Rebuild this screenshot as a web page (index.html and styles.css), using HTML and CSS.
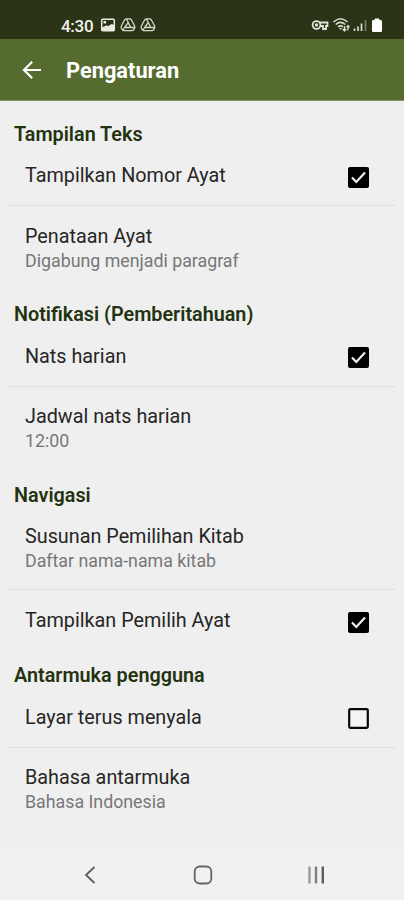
FILE: index.html
```html
<!DOCTYPE html>
<html lang="id">
<head>
<meta charset="utf-8">
<title>Pengaturan</title>
<link rel="stylesheet" href="styles.css">
</head>
<body>
<div class="screen">
  <header class="status">
    <span class="clock">4:30</span>
    <svg class="status-left" width="58" height="18" viewBox="0 0 58 18">
      <rect x="1.700" y="3.200" width="12.600" height="11.600" rx="1" fill="none" stroke="#e9ebe2" stroke-width="1.500"/>
      <path d="M2 14V11.500l4-2 2.500.5L11.500 8l2.500 1v5.500H2z" fill="#e9ebe2"/>
      <rect x="3.500" y="5" width="2.600" height="2.500" fill="#e9ebe2"/>
      <g fill="none" stroke="#d4d8c8" stroke-width="1.300" stroke-linejoin="round">
        <path d="M26.500 2.800h3q1.200 0 1.800 1l3.200 6q.8 1.400 0 2.600l-.8 1.300q-.6 1-1.800 1h-7.800q-1.200 0-1.800-1l-.8-1.300q-.8-1.200 0-2.600l3.200-6q.6-1 1.800-1zM28 6.500l-2.800 5h5.600zM26.500 3l4 8M34.500 11.500H26M23 14l3.500-5.500"/>
        <path d="M46.500 2.800h3q1.200 0 1.800 1l3.200 6q.8 1.400 0 2.600l-.8 1.300q-.6 1-1.800 1h-7.800q-1.200 0-1.800-1l-.8-1.300q-.8-1.200 0-2.600l3.200-6q.6-1 1.800-1zM48 6.500l-2.800 5h5.600zM46.500 3l4 8M54.500 11.500H46M43 14l3.500-5.500"/>
      </g>
    </svg>
    <svg class="status-right" width="72" height="18" viewBox="0 0 72 18">
      <g fill="none" stroke="#dfe2d5" stroke-width="1.800">
        <circle cx="5.500" cy="9" r="3.900"/><circle cx="5.500" cy="9" r=".8"/>
        <path d="M8.500 6.500h8v3.500h-1.500v3h-3v-3H9"/>
      </g>
      <g fill="none" stroke="#d9dccf" stroke-width="1.600">
        <path d="M22.500 6Q29.500-.5 36.500 6M24.800 8.500q4.700-4.300 9.400 0M27 11q2.500-2.200 5 0"/>
        <path d="M33.500 10v5M31.800 13l1.700 2 1.700-2M37 14.500v-5M35.500 11.300l1.500-1.800 1.500 1.800" stroke-width="1.300"/>
      </g>
      <path d="M28 12h3l-1.500 2z" fill="#d9dccf"/>
      <path d="M43.500 12.500v2.500M47 10.500V15M50.500 7.500V15" stroke="#d9dccf" stroke-width="1.700"/>
      <path d="M54.500 4v11" stroke="#7d846a" stroke-width="1.500"/>
      <path d="M61 5.200q0-1.200 1.200-1.200h1.500V2.500h4.600V4h1.500q1.200 0 1.200 1.200v9.600q0 1.200-1.200 1.200h-7.600q-1.200 0-1.200-1.200z" fill="#fff"/>
    </svg>
  </header>
  <div class="appbar">
    <svg class="back" width="20" height="20" viewBox="0 0 20 20" fill="none" stroke="#fff" stroke-width="2.200">
      <path d="M19 10H2.500M10.200 1.800 2 10l8.200 8.200"/>
    </svg>
    <h1>Pengaturan</h1>
  </div>
  <main>
    <section class="s1">
      <h2>Tampilan Teks</h2>
      <div class="row single">
        <div class="title">Tampilkan Nomor Ayat</div>
        <svg class="check" width="21" height="21" viewBox="0 0 21 21"><rect width="21" height="21" rx="2"/><path d="m4 10.500 4.300 4.500L17 5.500" fill="none" stroke="#efefef" stroke-width="2.200"/></svg>
      </div>
      <div class="row double">
        <div class="title">Penataan Ayat</div>
        <div class="sub">Digabung menjadi paragraf</div>
      </div>
    </section>
    <section class="s2">
      <h2>Notifikasi (Pemberitahuan)</h2>
      <div class="row single">
        <div class="title">Nats harian</div>
        <svg class="check" width="21" height="21" viewBox="0 0 21 21"><rect width="21" height="21" rx="2"/><path d="m4 10.500 4.300 4.500L17 5.500" fill="none" stroke="#efefef" stroke-width="2.200"/></svg>
      </div>
      <div class="row double">
        <div class="title">Jadwal nats harian</div>
        <div class="sub">12:00</div>
      </div>
    </section>
    <section class="s3">
      <h2>Navigasi</h2>
      <div class="row double divided">
        <div class="title">Susunan Pemilihan Kitab</div>
        <div class="sub">Daftar nama-nama kitab</div>
      </div>
      <div class="row single last">
        <div class="title">Tampilkan Pemilih Ayat</div>
        <svg class="check" width="21" height="21" viewBox="0 0 21 21"><rect width="21" height="21" rx="2"/><path d="m4 10.500 4.300 4.500L17 5.500" fill="none" stroke="#efefef" stroke-width="2.200"/></svg>
      </div>
    </section>
    <section class="s4">
      <h2>Antarmuka pengguna</h2>
      <div class="row single">
        <div class="title">Layar terus menyala</div>
        <svg class="check" width="21" height="21" viewBox="0 0 21 21"><rect x="1.200" y="1.200" width="18.600" height="18.600" rx="1" fill="#f4f4f4" stroke="#080808" stroke-width="2.200"/></svg>
      </div>
      <div class="row double">
        <div class="title">Bahasa antarmuka</div>
        <div class="sub">Bahasa Indonesia</div>
      </div>
    </section>
  </main>
  <nav>
    <svg width="20" height="20" viewBox="0 0 20 20" fill="none" stroke="#5c5c5c" stroke-width="1.800"><path d="M14.500 2 6 10l8.500 8"/></svg>
    <svg width="20" height="20" viewBox="0 0 20 20" fill="none" stroke="#646464" stroke-width="1.800"><rect x="1.700" y="1.500" width="16.600" height="17" rx="5"/></svg>
    <svg width="20" height="20" viewBox="0 0 20 20" fill="none" stroke-width="2.400"><path d="M3.500 1.500v17" stroke="#999"/><path d="M10 1.500v17" stroke="#808080"/><path d="M16.800 1.500v17" stroke="#5a5a5a"/></svg>
  </nav>
</div>
</body>
</html>
```
FILE: styles.css
```css
* { box-sizing: border-box; margin: 0; padding: 0; }
body { font-family: Roboto, sans-serif; background: #efefef; }
svg { display: block; flex: none; }
.screen { width: 404px; height: 900px; display: flex; flex-direction: column; overflow: hidden; }
.status { height: 39px; background: #2b3417; display: flex; padding: 16px 19px 0 61px; }
.clock { color: #f0f1eb; font-size: 17px; font-weight: 500; line-height: 20px; width: 39px; letter-spacing: -.3px; }
.status-right { margin-left: auto; margin-right: 2px; }
.appbar { height: 62px; background: #556b2f; border-bottom: 1px solid #82916a; display: flex; align-items: center; padding-left: 22px; gap: 24px; }
h1 { color: #fff; font-size: 21.8px; font-weight: 700; line-height: 28px; padding-top: 2px; }
section { display: flex; flex-direction: column; }
.s1, .s3 { height: 181px; }
.s2 { height: 180px; }
h2 { height: 45px; padding: 21px 0 0 14px; font-size: 19.8px; font-weight: 600; line-height: 24px; color: #23330f; white-space: nowrap; }
.s1 h2, .s3 h2 { padding-top: 22px; }
.row { margin: 0 8px 0 9px; padding-left: 16px; }
.single { height: 60px; display: flex; justify-content: space-between; padding-top: 18px; padding-right: 27px; border-bottom: 1px solid #dfdfdf; }
.check { margin-top: 3px; }
.s2 .check, .s4 .check { margin-top: 2px; }
.double { height: 76px; padding-top: 18px; }
.s1 .double { padding-top: 19px; }
.divided { height: 83px; border-bottom: 1px solid #dfdfdf; }
.last { height: 53px; padding-top: 19px; border-bottom: 0; }
.title { font-size: 19.8px; line-height: 24px; color: #262626; }
.sub { font-size: 17.8px; line-height: 24px; color: #777; }
nav { margin-top: auto; height: 51px; background: #f1f1f1; display: flex; justify-content: space-between; align-items: center; padding: 0 78px 0 80px; }
```
